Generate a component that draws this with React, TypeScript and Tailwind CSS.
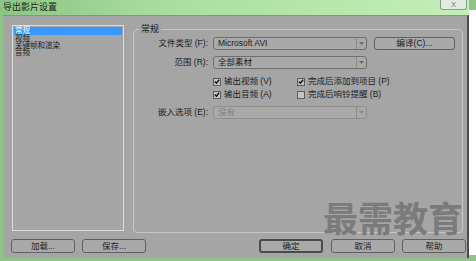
const cjk = "font-['Liberation_Sans','Noto_Sans_CJK_SC',sans-serif]";

function Select({ value, disabled }: { value: string; disabled?: boolean }) {
  return (
    <div
      className={`flex h-[13px] w-[154px] items-stretch rounded-[3px] border bg-[#a9a9a9] ${
        disabled ? "border-[#8e8e8e] text-[#7c7c7c]" : "border-[#6f6f6f] text-[#1c1c1c]"
      }`}
    >
      <span className="flex-1 pl-[4px] text-[8.5px] leading-[11px]">{value}</span>
      <span className="flex w-[10px] items-center justify-center border-l border-[#8c8c8c]">
        <svg width="5" height="3" viewBox="0 0 5 3">
          <path d="M0 0 L5 0 L2.5 3 Z" fill={disabled ? "#8a8a8a" : "#6a6a6a"} />
        </svg>
      </span>
    </div>
  );
}

function Check({ label, checked }: { label: string; checked?: boolean }) {
  return (
    <div className="flex h-[13px] items-center">
      <span className="flex h-[8px] w-[8px] items-center justify-center border border-[#5c5c5c] bg-[#c4c4c4]">
        {checked && (
          <svg width="7" height="7" viewBox="0 0 7 7">
            <path d="M1 3.6 L2.8 5.4 L6 1.4" stroke="#111" strokeWidth="1.6" fill="none" />
          </svg>
        )}
      </span>
      <span className="ml-[3px] text-[8.5px] leading-[11px]">{label}</span>
    </div>
  );
}

function Btn({ label, def, className = "" }: { label: string; def?: boolean; className?: string }) {
  return (
    <div
      className={`flex h-[14px] w-[64px] items-center justify-center rounded-[3px] bg-[#a9a9a9] text-[8.5px] leading-[11px] ${
        def ? "border-2 border-[#4a4a4a]" : "border border-[#606060]"
      } ${className}`}
    >
      {label}
    </div>
  );
}

export default function App() {
  return (
    <div className={`relative flex h-[261px] w-[476px] overflow-hidden bg-[#8fc487] text-[#1c1c1c] ${cjk}`}>
      <div className="flex w-[469px] flex-col">
        {/* title bar */}
        <div className="flex h-[15px] items-start bg-[linear-gradient(90deg,#8cc583,#a9dd9d_35%,#c4efb8)]">
          <span className="pl-[3px] pt-[2px] text-[9px] leading-[11px] text-[#202020]">导出影片设置</span>
          <div className="ml-auto mr-[2px] flex h-[10px] w-[27px] items-center justify-center rounded-b-[3px] border border-t-0 border-[#8a9a88] bg-[#e2ebdf] text-[7px] leading-none text-[#707070]">
            X
          </div>
        </div>

        {/* dialog body */}
        <div className="ml-[3px] flex h-[243px] flex-col border-t border-r-2 border-t-[#8e8e8e] border-r-[#4a4a4a] bg-[#a5a5a5] pl-[8px] pt-[8px]">
          <div className="flex items-start">
            {/* category list */}
            <div className="ml-[1px] mt-[1px] h-[206px] w-[112px] border border-[#dcdcdc] p-px text-[7.5px] leading-[7px]">
              <div className="h-[8px] bg-[#3399ff] pl-[1px] text-white">常规</div>
              <div className="pl-[1px]">视频</div>
              <div className="pl-[1px]">关键帧和渲染</div>
              <div className="pl-[1px]">音频</div>
            </div>

            {/* group box */}
            <fieldset className="ml-[9px] h-[209px] w-[330px] rounded-[4px] border border-[#c6c6c6]">
              <legend className="ml-[5px] px-[2px] text-[9px] leading-[11px]">常规</legend>

              <div className="mt-[2px] flex items-center">
                <span className="w-[74px] text-right text-[8.5px] leading-[11px]">文件类型 (F):</span>
                <div className="ml-[5px]">
                  <Select value="Microsoft AVI" />
                </div>
                <div className="ml-[7px] flex h-[13px] w-[81px] items-center justify-center rounded-[3px] border border-[#606060] bg-[#a9a9a9] text-[8.5px] leading-[11px]">
                  编译(C)...
                </div>
              </div>

              <div className="mt-[6px] flex items-center">
                <span className="w-[74px] text-right text-[8.5px] leading-[11px]">范围 (R):</span>
                <div className="ml-[5px]">
                  <Select value="全部素材" />
                </div>
              </div>

              <div className="ml-[79px] mt-[6px] flex">
                <div className="flex w-[84px] flex-col">
                  <Check label="输出视频 (V)" checked />
                  <Check label="输出音频 (A)" checked />
                </div>
                <div className="flex flex-col">
                  <Check label="完成后添加到项目 (P)" checked />
                  <Check label="完成后响铃提醒 (B)" />
                </div>
              </div>

              <div className="mt-[5px] flex items-center">
                <span className="w-[74px] text-right text-[8.5px] leading-[11px]">嵌入选项 (E):</span>
                <div className="ml-[5px]">
                  <Select value="没有" disabled />
                </div>
              </div>
            </fieldset>
          </div>

          {/* bottom buttons */}
          <div className="mt-[6px] flex pr-[1px]">
            <Btn label="加载..." />
            <Btn label="保存..." className="ml-[7px]" />
            <Btn label="确定" def className="ml-auto" />
            <Btn label="取消" className="ml-[8px]" />
            <Btn label="帮助" className="ml-[7px]" />
          </div>
        </div>
      </div>

      {/* neighbouring window edge */}
      <div className="mt-[10px] h-[245px] w-[7px] bg-white" />

      {/* watermark */}
      <div className="pointer-events-none absolute left-[323px] top-[197px] text-[35px] font-bold leading-[40px] text-[#7b7b7b] font-['Noto_Sans_CJK_SC',sans-serif]">
        最需教育
      </div>
    </div>
  );
}
